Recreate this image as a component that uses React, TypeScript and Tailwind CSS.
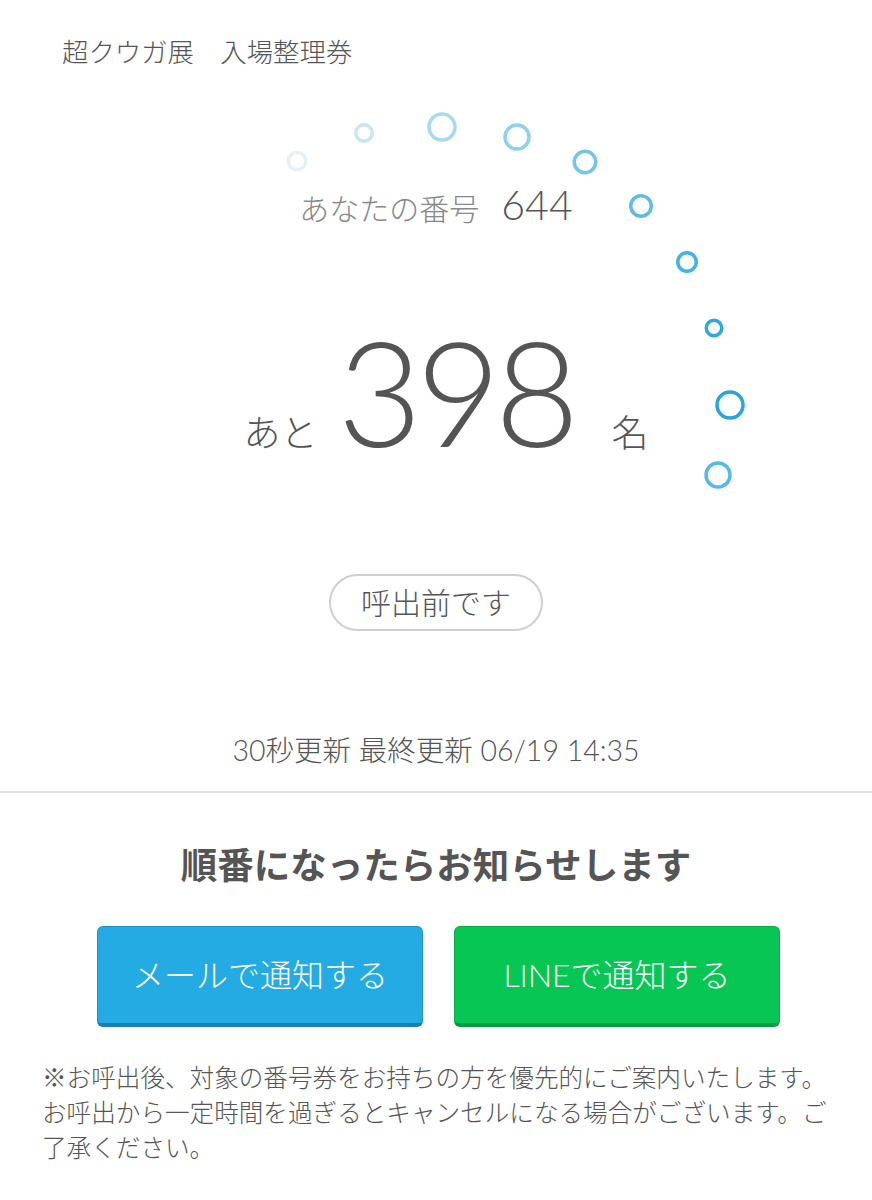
import React from "react";

const circles: { cx: number; cy: number; r: number; c: string; w: number }[] = [
  { cx: 297, cy: 161, r: 8.75, c: "#e4f1f8", w: 3.5 },
  { cx: 364, cy: 133, r: 8.25, c: "#c9e6f2", w: 3.5 },
  { cx: 442, cy: 127, r: 13, c: "#a8daee", w: 3.5 },
  { cx: 517, cy: 137, r: 12, c: "#8fd0ec", w: 3.5 },
  { cx: 585, cy: 162, r: 10.75, c: "#74c6e9", w: 3.5 },
  { cx: 641, cy: 206, r: 10.25, c: "#5cbde6", w: 3.5 },
  { cx: 687, cy: 262, r: 9.25, c: "#44b2e2", w: 3.5 },
  { cx: 714, cy: 328, r: 7.75, c: "#2fa8de", w: 3.5 },
  { cx: 730, cy: 405, r: 13, c: "#29a5dd", w: 3.5 },
  { cx: 718, cy: 475, r: 12, c: "#55bbe5", w: 3.5 },
];

export default function App() {
  return (
    <div
      className="relative w-[872px] min-h-[1200px] bg-white text-[#555]"
      style={{ fontFamily: "Lato, 'Noto Sans CJK JP', sans-serif" }}
    >
      <svg
        className="absolute left-0 top-0 pointer-events-none"
        width={872}
        height={520}
        viewBox="0 0 872 520"
      >
        {circles.map((c, i) => (
          <circle key={i} cx={c.cx} cy={c.cy} r={c.r} fill="none" stroke={c.c} strokeWidth={c.w} />
        ))}
      </svg>

      <div className="pt-[34px] pl-[62px] text-[26.4px] leading-[36px] font-light text-[#555]">
        超クウガ展　入場整理券
      </div>

      <div className="mt-[111px] flex items-baseline justify-center h-[48px] leading-[48px]">
        <span className="text-[30px] font-light text-[#888]">あなたの番号</span>
        <span className="ml-[22px] text-[41px] font-light text-[#555]">644</span>
      </div>

      <div className="mt-[89px] flex items-baseline justify-center h-[146px] leading-none pl-[20px]">
        <span className="text-[37px] font-light text-[#555]">あと</span>
        <span className="ml-[20px] text-[146px] font-light tracking-[-6px] text-[#555]">398</span>
        <span className="ml-[38px] text-[37px] font-light text-[#555]">名</span>
      </div>

      <div className="mt-[110px] flex justify-center">
        <div className="flex h-[57px] w-[214px] items-center justify-center rounded-full border-2 border-[#cfcfcf] text-[30px] font-light text-[#555]">
          呼出前です
        </div>
      </div>

      <div className="mt-[101px] text-center text-[28.5px] leading-[36px] font-light text-[#555]">
        30秒更新 最終更新 06/19 14:35
      </div>

      <div className="mt-[23px] border-t-2 border-[#e2e2e2]" />

      <div className="mt-[48px] text-center text-[36.5px] leading-[48px] font-bold text-[#555]">
        順番になったらお知らせします
      </div>

      <div className="mt-[37px] flex gap-[31px] pl-[97px]">
        <div className="flex h-[101px] w-[326px] items-center justify-center rounded-[6px] border border-[#1f93c6] border-b-[4px] border-b-[#1a7fae] bg-[#25abe3] text-[32px] font-light text-white">
          メールで通知する
        </div>
        <div className="flex h-[101px] w-[326px] items-center justify-center rounded-[6px] border border-[#06ad4a] border-b-[4px] border-b-[#079a43] bg-[#07c653] text-[32px] font-light text-white">
          LINEで通知する
        </div>
      </div>

      <div className="mt-[33px] pl-[42px] pr-[40px] text-[24.6px] leading-[35px] font-light text-[#555]">
        ※お呼出後、対象の番号券をお持ちの方を優先的にご案内いたします。お呼出から一定時間を過ぎるとキャンセルになる場合がございます。ご了承ください。
      </div>
    </div>
  );
}
